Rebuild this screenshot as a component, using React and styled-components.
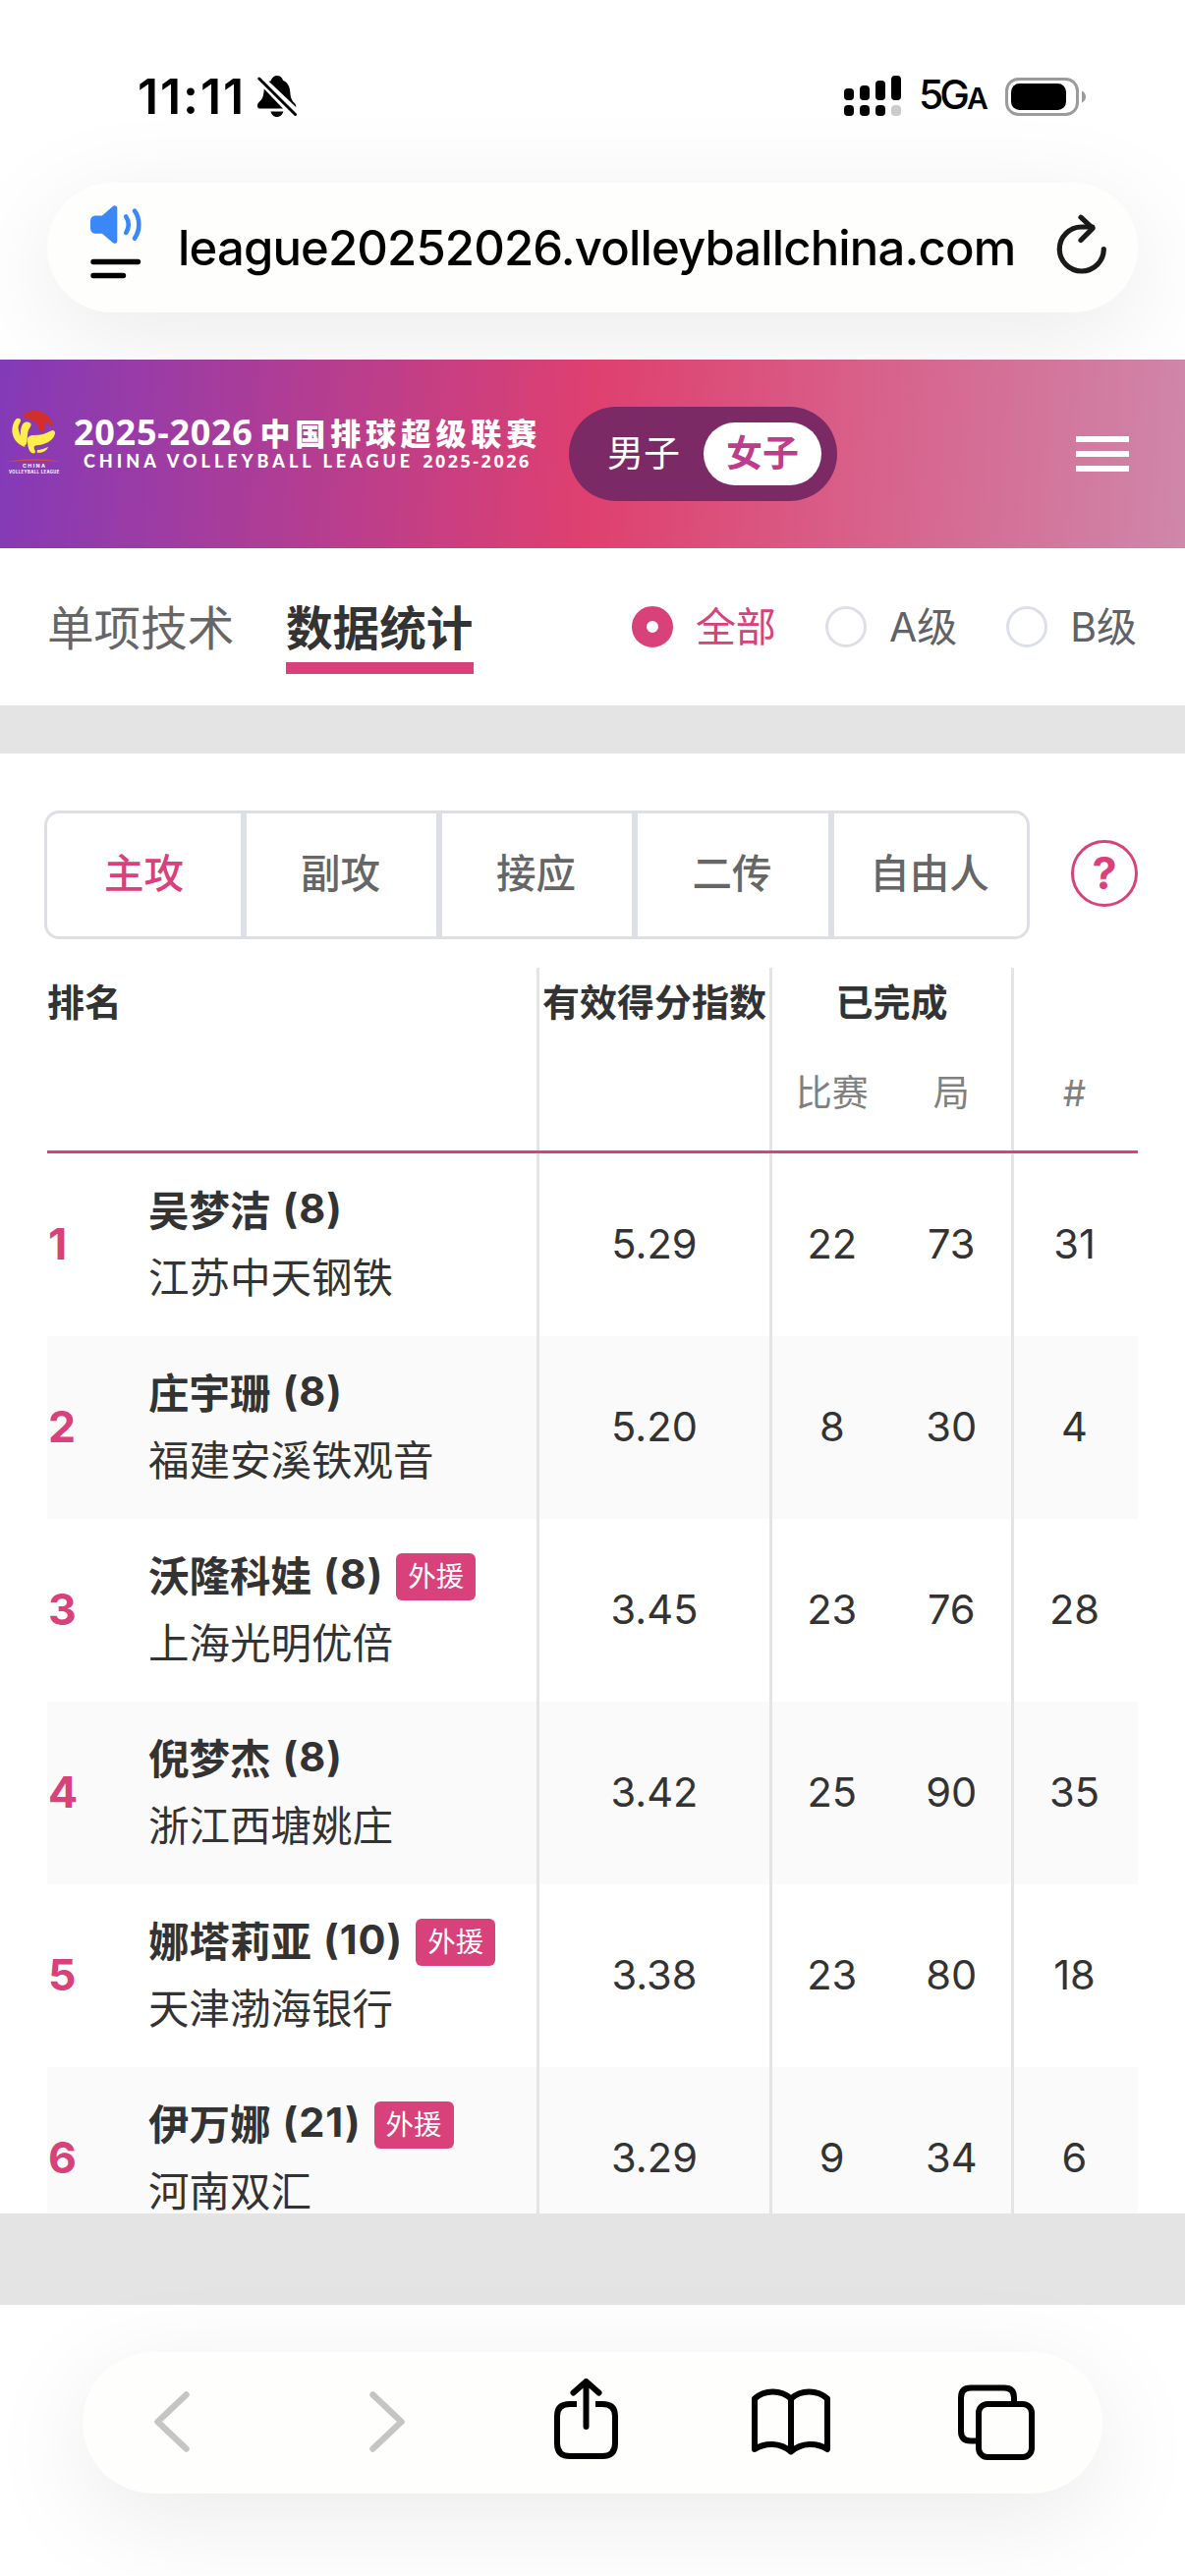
import React from "react";
import styled, { createGlobalStyle } from "styled-components";

const pink = "#d84179";
const line = "#e4e4e4";
const border = "#dcdfe6";

const GlobalStyle = createGlobalStyle`
  * { box-sizing: border-box; }
  html, body { margin: 0; padding: 0; background: #fff; }
  body {
    width: 1206px;
    height: 2622px;
    overflow: hidden;
    font-family: Inter, "Noto Sans CJK SC", sans-serif;
    font-feature-settings: "calt" 0;
    color: #333;
  }
  svg { display: block; flex: none; }
`;

const Screen = styled.div`
  width: 1206px;
  height: 2622px;
  display: flex;
  flex-direction: column;
  background: #fff;
  overflow: hidden;
`;

/* ---------- status bar and address bar ---------- */

const StatusBar = styled.div`
  height: 186px;
  flex: none;
  display: flex;
  justify-content: space-between;
  align-items: flex-start;
  padding: 68px 101px 0 140px;
  position: relative;
  z-index: 1;
  color: #000;
`;

const StatusGroup = styled.div`
  display: flex;
  align-items: center;
  height: 60px;
`;

const Clock = styled.span`
  font-size: 50px;
  font-weight: 600;
  line-height: 60px;
  letter-spacing: 1.9px;
  width: 122px;
  white-space: nowrap;
`;

const Network = styled.span`
  display: flex;
  align-items: baseline;
  width: 105px;
  padding-left: 17px;
  font-size: 41px;
  font-weight: 500;
  line-height: 62px;
  letter-spacing: -4px;
  white-space: nowrap;

  small {
    font-size: 30px;
    font-weight: 600;
    margin-left: 1px;
  }
`;

const AddressArea = styled.div`
  height: 180px;
  flex: none;
  padding: 0 48px;
`;

const AddressPill = styled.div`
  height: 132px;
  border-radius: 66px;
  background: #fefefd;
  box-shadow: 0 24px 108px rgba(0, 0, 0, 0.085);
  display: flex;
  align-items: center;
  padding: 0 31px 0 44px;
`;

const Url = styled.div`
  flex: 1;
  padding: 2px 0 0 37px;
  font-size: 49px;
  font-weight: 500;
  line-height: 60px;
  letter-spacing: -0.85px;
  color: #000;
  white-space: nowrap;
`;

/* ---------- site header ---------- */

const SiteHeader = styled.header`
  height: 192px;
  flex: none;
  position: relative;
  z-index: 1;
  display: flex;
  align-items: center;
  padding: 0 57px 0 8px;
  color: #fff;
  background: linear-gradient(94deg, #833ab8 0%, #df406f 50%, #cf87aa 100%);
`;

const Brand = styled.div`
  width: 571px;
  display: flex;
  align-items: flex-start;
  height: 90px;
`;

const BrandText = styled.div`
  padding: 4px 0 0 14px;
  font-family: "Noto Sans", "Noto Sans CJK SC", sans-serif;
  white-space: nowrap;
`;

const BrandTitle = styled.div`
  display: flex;
  height: 38px;
  line-height: 38px;
  font-size: 36px;
  font-weight: 700;
  letter-spacing: 0.7px;

  b {
    margin-left: 7px;
    font-family: "Noto Sans CJK SC", sans-serif;
    font-size: 31px;
    font-weight: 900;
    letter-spacing: 4.8px;
  }
`;

const BrandSub = styled.div`
  display: flex;
  align-items: baseline;
  padding-left: 10px;
  height: 20px;
  line-height: 20px;
  font-family: Lato, sans-serif;
  font-size: 18px;
  font-weight: 900;
  letter-spacing: 4px;

  span {
    margin-left: 9px;
    font-family: "Noto Sans", sans-serif;
    font-weight: 700;
    letter-spacing: 2.5px;
  }
`;

const GenderSwitch = styled.div`
  width: 273px;
  height: 96px;
  border-radius: 48px;
  background: #7c2a66;
  display: flex;
  align-items: center;
  justify-content: space-between;
  padding: 0 16px;
`;

const GenderOption = styled.button`
  width: ${(p) => (p.$active ? 120 : 116)}px;
  margin-left: ${(p) => (p.$active ? 0 : 2)}px;
  height: 64px;
  padding: 0;
  border: 0;
  border-radius: 32px;
  font: ${(p) => (p.$active ? 700 : 400)} 37px/60px Inter, "Noto Sans CJK SC", sans-serif;
  color: ${(p) => (p.$active ? "#bb3d8b" : "#fff")};
  background: ${(p) => (p.$active ? "#fff" : "transparent")};
`;

const Burger = styled.button`
  margin-left: auto;
  padding: 0;
  border: 0;
  background: none;
  width: 54px;
  height: 36px;
  display: flex;
  flex-direction: column;
  justify-content: space-between;

  i {
    height: 6px;
    width: 100%;
    background: #fff;
  }
`;

/* ---------- section tabs and level filter ---------- */

const SectionBar = styled.nav`
  height: 160px;
  flex: none;
  display: flex;
  align-items: center;
  padding: 0 49px 0 48px;
`;

const SectionTab = styled.a`
  height: 96px;
  width: 191px;
  margin-right: 52px;
  line-height: 99px;
  font-size: 47.6px;
  font-weight: ${(p) => (p.$active ? 700 : 400)};
  color: ${(p) => (p.$active ? "#333" : "#666")};
  border-bottom: 12px solid ${(p) => (p.$active ? pink : "transparent")};
  white-space: nowrap;
`;

const Levels = styled.div`
  margin-left: auto;
  display: flex;
  gap: 50px;
`;

const Level = styled.label`
  display: flex;
  align-items: center;
  gap: 23px;
  font-size: 41px;
  line-height: 60px;
  color: ${(p) => (p.$active ? pink : "#606266")};
  white-space: nowrap;
`;

const Radio = styled.span`
  width: 42px;
  height: 42px;
  border-radius: 50%;
  background: #fff;
  border: ${(p) => (p.$active ? `15px solid ${pink}` : `3px solid ${border}`)};
`;

const Band = styled.div`
  height: ${(p) => p.$h}px;
  flex: none;
  background: #e4e4e4;
`;

/* ---------- statistics ---------- */

const Stats = styled.main`
  height: 1486px;
  flex: none;
  overflow: hidden;
  padding: 58px 48px 0;
`;

const Controls = styled.div`
  display: flex;
  align-items: center;
  justify-content: space-between;
  margin-left: -3px;
`;

const Positions = styled.div`
  width: 1003px;
  height: 131px;
  display: grid;
  grid-template-columns: 200px 199px 199px 200px 199px;
  border: 3px solid ${border};
  border-radius: 15px;
`;

const Position = styled.button`
  padding: 0 ${(p) => (p.$first ? 0 : 2)}px 2px 0;
  border: 0;
  border-right: ${(p) => (p.$last ? 0 : 6)}px solid ${border};
  margin-right: ${(p) => (p.$last ? 0 : -3)}px;
  margin-left: ${(p) => (p.$first ? 0 : 3)}px;
  background: none;
  font: 500 40.5px/120px Inter, "Noto Sans CJK SC", sans-serif;
  color: ${(p) => (p.$active ? pink : "#666")};
`;

const Help = styled.button`
  width: 68px;
  height: 68px;
  margin-bottom: 4px;
  padding: 0;
  border: 3px solid ${pink};
  border-radius: 50%;
  background: none;
  color: ${pink};
  font: 700 45px/60px Inter, sans-serif;
`;

const Columns = styled.div`
  display: grid;
  grid-template-columns: 92px 409px 237px 246px 126px;
`;

const TableHead = styled(Columns)`
  margin-top: 29px;
  height: 189px;
  border-bottom: 3px solid ${pink};
`;

const HeadCell = styled.div`
  grid-column: ${(p) => (p.$span ? `span ${p.$span}` : "auto")};
  border-right: ${(p) => (p.$rule ? 3 : 0)}px solid ${line};
  padding-right: ${(p) => (p.$rule ? 0 : 3)}px;
  text-align: ${(p) => (p.$left ? "left" : "center")};
  white-space: nowrap;
`;

const HeadTitle = styled.div`
  height: 93px;
  line-height: 70px;
  font-size: 38px;
  font-weight: 700;
`;

const SubTitles = styled.div`
  display: flex;
  height: 69px;
  line-height: 70px;
  font-size: 37px;
  color: #808080;

  span { flex: 1; }
`;

const Row = styled(Columns)`
  height: 186px;
  background: ${(p) => (p.$shaded ? "#fafafa" : "#fff")};
`;

const Rank = styled.div`
  padding-left: 1px;
  line-height: 185px;
  font-size: 44.5px;
  font-weight: 700;
  color: ${pink};
`;

const Player = styled.div`
  padding: 21px 0 0 11px;
  border-right: 3px solid ${line};
  white-space: nowrap;
`;

const PlayerName = styled.div`
  display: flex;
  align-items: center;
  height: 69px;
  font-size: 41.5px;
  font-weight: 700;
`;

const Shirt = styled.span`
  margin-left: 12px;
  letter-spacing: 1px;
`;

const Team = styled.div`
  height: 69px;
  margin-top: 1px;
  line-height: 73px;
  font-size: 41.5px;
`;

const ForeignTag = styled.span`
  width: 81px;
  height: 48px;
  margin: 6px 0 0 13px;
  border-radius: 6px;
  background: ${pink};
  color: #fff;
  font-size: 28.5px;
  font-weight: 400;
  line-height: 47px;
  text-align: center;
`;

const Values = styled.div`
  display: flex;
  border-right: ${(p) => (p.$rule ? 3 : 0)}px solid ${line};
  padding-right: ${(p) => (p.$rule ? 0 : 3)}px;
  font-size: 41.6px;
  line-height: 185px;
  text-align: center;

  span { flex: 1; }
`;

/* ---------- browser toolbar ---------- */

const ToolbarArea = styled.footer`
  flex: 1;
  padding: 48px 84px 0;
`;

const Toolbar = styled.div`
  height: 144px;
  border-radius: 72px;
  background: #fefefd;
  box-shadow: 0 24px 108px rgba(0, 0, 0, 0.085);
  display: flex;
  align-items: center;
  padding: 0 69px 2px 70px;
`;

const ToolButton = styled.button`
  margin: 0 0 ${(p) => p.$lift || 0}px ${(p) => p.$gap || 0}px;
  padding: 0;
  border: 0;
  background: none;
`;

const players = [
  ["吴梦洁", 8, "江苏中天钢铁", "5.29", 22, 73, 31],
  ["庄宇珊", 8, "福建安溪铁观音", "5.20", 8, 30, 4],
  ["沃隆科娃", 8, "上海光明优倍", "3.45", 23, 76, 28, true],
  ["倪梦杰", 8, "浙江西塘姚庄", "3.42", 25, 90, 35],
  ["娜塔莉亚", 10, "天津渤海银行", "3.38", 23, 80, 18, true],
  ["伊万娜", 21, "河南双汇", "3.29", 9, 34, 6, true],
];

const positions = ["主攻", "副攻", "接应", "二传", "自由人"];
const levels = ["全部", "A级", "B级"];

function BellOff() {
  return (
    <svg width="40" height="42" viewBox="0 0 40 42">
      <path d="M13.5 5.5C14.5 2.5 16.5 0 19.8 0s5.300 2 6.200 4.800c5 2.200 7 7 7.300 12 .3 6 1.700 8.500 4.500 11.200 1 1 1.400 1.800 1.400 3V32L11.500 5.800z" />
      <path d="M6.800 13.500 26 33.500H3c-4 0-3.700-4.500-1.400-6.500 3.500-3 4.700-6 5.200-13.500zM13.500 36.500h12.800c-.8 3.400-3.300 5.500-6.400 5.500s-5.600-2.100-6.400-5.500z" />
      <path d="M1.800 2.500 38.500 40" stroke="#fff" strokeWidth="6" />
      <path d="M1.800 3 38.500 39.500" stroke="#000" strokeWidth="3" strokeLinecap="round" />
    </svg>
  );
}

function Signal() {
  return (
    <svg width="59" height="42" viewBox="0 0 59 42">
      <rect x="0" y="13" width="10" height="12" rx="4" />
      <rect x="16" y="10" width="10" height="15" rx="4" />
      <rect x="32" y="5" width="10" height="20" rx="4" />
      <rect x="48" y="0" width="10" height="25" rx="4" />
      <rect x="0" y="30" width="10" height="11" rx="4" />
      <rect x="16" y="30" width="10" height="11" rx="4" />
      <rect x="32" y="30" width="10" height="11" rx="4" />
      <rect x="48" y="30" width="10" height="11" rx="4" fill="#cbcbcb" />
    </svg>
  );
}

function Battery() {
  return (
    <svg width="82" height="39" viewBox="0 0 82 39">
      <rect x="1.500" y="1.500" width="72" height="36" rx="12" fill="none" stroke="#9b9b9b" strokeWidth="3" />
      <rect x="6" y="6" width="56" height="27" rx="8.500" />
      <path d="M78 13.500c2.500 1 4 3.400 4 6s-1.500 5-4 6z" fill="#9b9b9b" />
    </svg>
  );
}

function ReaderMenu() {
  return (
    <svg width="52" height="86" viewBox="0 0 52 86">
      <path d="M6 10.500h6L22.500 1.200c2-1.900 4.800-1 4.800 1.600v33.400c0 2.600-2.800 3.500-4.800 1.600L12 28.700H6c-4 0-6-2-6-6v-6.200c0-4 2-6 6-6z" fill="#3a87f8" />
      <path
        d="M36.200 11.500c3.400 4.800 3.400 11.500 0 16.300M45 5.600c5.800 8 5.800 20 0 28"
        fill="none"
        stroke="#3a87f8"
        strokeWidth="4.600"
        strokeLinecap="round"
      />
      <path d="M3 57.500h45.500M3 71.500h30.500" stroke="#000" strokeWidth="5.400" strokeLinecap="round" />
    </svg>
  );
}

function Reload() {
  return (
    <svg width="52" height="68" viewBox="0 0 52 68" fill="none" stroke="#1a1a1a" strokeWidth="5.200" strokeLinecap="round" strokeLinejoin="round">
      <path d="M48.300 35.500A22.500 22.500 0 1 1 25.800 13h11" />
      <path d="M25 3.200 37 14.400 25 26.500" />
    </svg>
  );
}

function LeagueLogo() {
  return (
    <svg width="53" height="67" viewBox="24 54 159 201">
      <path d="M73 70c8-10 24-15 44-12 24 5 42 22 45 45-5 5-9 1-11-4-3-7-10-8-13-2-4 7 1 19-7 24-11 4-10-11-17-21-8-12-18-18-30-20-9-1-15-3-11-10z" fill="#d22f2c" />
      <g fill="#fdee4b">
        <path d="M50 82c6-4 13-1 13 5-1 9-8 12-7 24 2 19 15 37 21 57-19-5-35-20-39-41-3-18 3-36 12-45z" />
        <path d="M72 95c8-7 23-4 23 5-1 8-8 12-10 23-3 15 0 27-5 37-4 6-10 3-13-6-7-20-6-48 5-59z" />
        <path d="M84 148c-1-12 7-16 20-16 20 0 36-5 50-13 9-5 15 0 14 8-3 17-21 30-43 34-10 2-20 0-21 8-1 7 7 12 2 18-13 3-22-12-22-39z" />
        <path d="M114 177c12-1 23-4 33-10-3 12-17 20-34 18z" />
      </g>
      <path d="M28 211q75-13 150 0v2q-75-8-150 0z" fill="#d54a3d" />
      <g fill="#fff" fontFamily="Inter, sans-serif" fontWeight="700">
        <text x="69" y="230" fontSize="16" textLength="69">CHINA</text>
        <text x="27" y="249" fontSize="12.500" textLength="154">VOLLEYBALL LEAGUE</text>
      </g>
    </svg>
  );
}

const Chevron = ({ flip }) => (
  <svg width="42" height="64" viewBox="0 0 42 64" fill="none" stroke="#c5c5c5" strokeWidth="6.500" strokeLinecap="round" strokeLinejoin="round">
    <path d={flip ? "M6.500 4.500 35.500 32l-29 27.500" : "M35.500 4.500 6.500 32l29 27.500"} />
  </svg>
);

const Share = () => (
  <svg width="65" height="82" viewBox="0 0 65 82" fill="none" stroke="#000" strokeWidth="6" strokeLinecap="round" strokeLinejoin="round">
    <path d="M23 26h-7Q3 26 3 38v28q0 13 13 13h33q13 0 13-13V38q0-12-13-12h-7" strokeLinecap="butt" />
    <path d="M32.500 49V4M19.500 14.500 32.500 3l13 11.500" />
  </svg>
);

const Book = () => (
  <svg width="80" height="68" viewBox="0 0 80 68" fill="none" stroke="#000" strokeWidth="6" strokeLinecap="round" strokeLinejoin="round">
    <path d="M40 10.500C30 1 13 1 3 10.500v51.500C14 55 29 55 40 64.500 51 55 66 55 77 62V10.500C67 1 50 1 40 10.500zV64" />
  </svg>
);

const TabsIcon = () => (
  <svg width="78" height="77" viewBox="0 0 78 77" fill="none" stroke="#000" strokeWidth="6">
    <path d="M18 57.500h-5Q3 57.500 3 47.500v-34Q3 3.500 13 3.500h34q10 0 10 10V17" />
    <rect x="21" y="20" width="54" height="54" rx="9" />
  </svg>
);

export default function App() {
  return (
    <Screen>
      <GlobalStyle />
      <StatusBar>
        <StatusGroup>
          <Clock>11:11</Clock>
          <BellOff />
        </StatusGroup>
        <StatusGroup>
          <Signal />
          <Network>5G<small>A</small></Network>
          <Battery />
        </StatusGroup>
      </StatusBar>
      <AddressArea>
        <AddressPill>
          <ReaderMenu />
          <Url>league20252026.volleyballchina.com</Url>
          <Reload />
        </AddressPill>
      </AddressArea>

      <SiteHeader>
        <Brand>
          <LeagueLogo />
          <BrandText>
            <BrandTitle>2025-2026<b>中国排球超级联赛</b></BrandTitle>
            <BrandSub>CHINA VOLLEYBALL LEAGUE<span>2025-2026</span></BrandSub>
          </BrandText>
        </Brand>
        <GenderSwitch>
          <GenderOption>男子</GenderOption>
          <GenderOption $active>女子</GenderOption>
        </GenderSwitch>
        <Burger><i /><i /><i /></Burger>
      </SiteHeader>

      <SectionBar>
        <SectionTab>单项技术</SectionTab>
        <SectionTab $active>数据统计</SectionTab>
        <Levels>
          {levels.map((l, i) => (
            <Level key={l} $active={i === 0}><Radio $active={i === 0} />{l}</Level>
          ))}
        </Levels>
      </SectionBar>
      <Band $h={49} />

      <Stats>
        <Controls>
          <Positions>
            {positions.map((p, i) => (
              <Position key={p} $active={i === 0} $first={i === 0} $last={i === positions.length - 1}>{p}</Position>
            ))}
          </Positions>
          <Help>?</Help>
        </Controls>
        <TableHead>
          <HeadCell $span={2} $left $rule><HeadTitle>排名</HeadTitle></HeadCell>
          <HeadCell $rule><HeadTitle>有效得分指数</HeadTitle></HeadCell>
          <HeadCell $rule>
            <HeadTitle>已完成</HeadTitle>
            <SubTitles><span>比赛</span><span>局</span></SubTitles>
          </HeadCell>
          <HeadCell>
            <HeadTitle />
            <SubTitles><span>#</span></SubTitles>
          </HeadCell>
        </TableHead>
        {players.map(([name, no, team, index, matches, sets, total, foreign], i) => (
          <Row key={name} $shaded={i % 2 === 1}>
            <Rank>{i + 1}</Rank>
            <Player>
              <PlayerName>
                {name}
                <Shirt>({no})</Shirt>
                {foreign && <ForeignTag>外援</ForeignTag>}
              </PlayerName>
              <Team>{team}</Team>
            </Player>
            <Values $rule><span>{index}</span></Values>
            <Values $rule><span>{matches}</span><span>{sets}</span></Values>
            <Values><span>{total}</span></Values>
          </Row>
        ))}
      </Stats>
      <Band $h={93} />

      <ToolbarArea>
        <Toolbar>
          <ToolButton><Chevron /></ToolButton>
          <ToolButton $gap={177}><Chevron flip /></ToolButton>
          <ToolButton $gap={149} $lift={7}><Share /></ToolButton>
          <ToolButton $gap={136}><Book /></ToolButton>
          <ToolButton $gap={130}><TabsIcon /></ToolButton>
        </Toolbar>
      </ToolbarArea>
    </Screen>
  );
}
